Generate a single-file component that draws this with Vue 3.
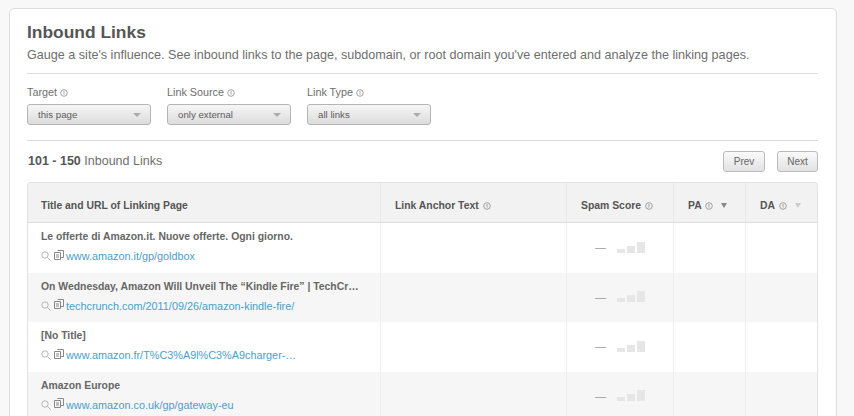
<script setup>
const filters = [
  { label: 'Target', value: 'this page' },
  { label: 'Link Source', value: 'only external' },
  { label: 'Link Type', value: 'all links' }
]

const rows = [
  { title: 'Le offerte di Amazon.it. Nuove offerte. Ogni giorno.', url: 'www.amazon.it/gp/goldbox' },
  { title: 'On Wednesday, Amazon Will Unveil The “Kindle Fire” | TechCr…', url: 'techcrunch.com/2011/09/26/amazon-kindle-fire/' },
  { title: '[No Title]', url: 'www.amazon.fr/T%C3%A9l%C3%A9charger-…' },
  { title: 'Amazon Europe', url: 'www.amazon.co.uk/gp/gateway-eu' }
]
</script>

<template>
  <div class="page">
    <section class="card">
      <h1>Inbound Links</h1>
      <p class="lede">Gauge a site's influence. See inbound links to the page, subdomain, or root domain you've entered and analyze the linking pages.</p>

      <div class="filters">
        <div v-for="f in filters" :key="f.label" class="filter">
          <div class="filter-label">
            {{ f.label }}
            <svg class="info" viewBox="0 0 8 8"><circle cx="4" cy="4" r="3.3" /><path d="M4 2v3.6" /></svg>
          </div>
          <div class="select">
            <span>{{ f.value }}</span>
            <i class="caret"></i>
          </div>
        </div>
      </div>

      <div class="result-bar">
        <div class="count"><strong>101 - 150</strong> Inbound Links</div>
        <div class="pager">
          <button>Prev</button>
          <button>Next</button>
        </div>
      </div>

      <div class="table">
        <div class="row head">
          <div class="cell">Title and URL of Linking Page</div>
          <div class="cell pad">Link Anchor Text
            <svg class="info" viewBox="0 0 8 8"><circle cx="4" cy="4" r="3.3" /><path d="M4 2v3.6" /></svg>
          </div>
          <div class="cell pad">Spam Score
            <svg class="info" viewBox="0 0 8 8"><circle cx="4" cy="4" r="3.3" /><path d="M4 2v3.6" /></svg>
          </div>
          <div class="cell pad">PA
            <svg class="info" viewBox="0 0 8 8"><circle cx="4" cy="4" r="3.3" /><path d="M4 2v3.6" /></svg>
            <i class="sort"></i>
          </div>
          <div class="cell pad">DA
            <svg class="info" viewBox="0 0 8 8"><circle cx="4" cy="4" r="3.3" /><path d="M4 2v3.6" /></svg>
            <i class="sort light"></i>
          </div>
        </div>

        <div v-for="r in rows" :key="r.url" class="row body">
          <div class="cell title-cell">
            <div class="link-title">{{ r.title }}</div>
            <div class="link-url">
              <svg class="mini" viewBox="0 0 10 10"><circle cx="4" cy="4" r="3.2" /><path d="M6.4 6.4 9.6 9.6" /></svg>
              <svg class="mini copy" viewBox="0 0 10 10"><path d="M3.5 .5h6v7h-3M.5 2.5h6v7h-6zM2 5h3M2 7h3" /></svg>
              <a>{{ r.url }}</a>
            </div>
          </div>
          <div class="cell"></div>
          <div class="cell spam">
            <span class="dash">—</span>
            <span class="bars"><b></b><b></b><b></b></span>
          </div>
          <div class="cell"></div>
          <div class="cell"></div>
        </div>
      </div>
    </section>
  </div>
</template>

<style scoped>
.page {
  height: 416px;
  overflow: hidden;
  box-sizing: border-box;
  padding: 8px 17px 0 9px;
  background: #f8f8f8;
  font-family: "Liberation Sans", Arial, sans-serif;
  color: #555;
}

.card {
  height: 440px;
  box-sizing: border-box;
  padding: 13px 18px 0 17px;
  background: #fff;
  border: 1px solid #dedede;
  border-radius: 5px;
}

h1 {
  margin: 0;
  font-size: 17.4px;
  line-height: 20px;
  font-weight: 700;
  color: #555;
}

.lede {
  margin: 4px 0 0;
  padding-bottom: 9px;
  border-bottom: 1px solid #ddd;
  font-size: 12.6px;
  line-height: 18px;
  color: #6e6e6e;
}

.filters {
  display: flex;
  gap: 16px;
  padding: 10px 0 15px;
  border-bottom: 1px solid #ddd;
}

.filter-label {
  font-size: 10.8px;
  line-height: 16px;
  color: #6e6e6e;
}

.info {
  width: 8px;
  height: 8px;
  fill: none;
  stroke: #999;
  stroke-width: 0.9;
  vertical-align: -1px;
}

.select {
  display: flex;
  align-items: center;
  justify-content: space-between;
  box-sizing: border-box;
  width: 124px;
  height: 21px;
  margin-top: 4px;
  padding: 0 9px 0 10px;
  border: 1px solid #b5b5b5;
  border-radius: 3px;
  background: linear-gradient(#f6f6f6, #dcdcdc);
  font-size: 9.7px;
  color: #5c5c5c;
}

.caret {
  width: 0;
  height: 0;
  border: 4px solid transparent;
  border-top: 4px solid #aaa;
  border-bottom: 0;
}

.result-bar {
  display: flex;
  align-items: center;
  justify-content: space-between;
  height: 41px;
}

.count {
  margin: -2px 0 0 1px;
  font-size: 12.5px;
  color: #6e6e6e;
}

.count strong {
  color: #555;
}

.pager {
  display: flex;
  gap: 12px;
}

button {
  width: 42px;
  height: 21px;
  padding: 0;
  border: 1px solid #bbb;
  border-radius: 3px;
  background: linear-gradient(#fafafa, #e2e2e2);
  font-family: inherit;
  font-size: 10px;
  color: #666;
}

button:last-child {
  width: 41px;
}

.table {
  border: 1px solid #e2e2e2;
  border-bottom: 0;
  border-radius: 4px 4px 0 0;
  overflow: hidden;
}

.row {
  display: grid;
  grid-template-columns: 353px 186px 107px 72px 1fr;
}

.cell {
  box-sizing: border-box;
  border-right: 1px solid #eee;
}

.cell:last-child {
  border-right: 0;
}

.head {
  height: 39px;
  background: #f2f2f2;
  border-bottom: 1px solid #dcdcdc;
  font-size: 10.4px;
  font-weight: 700;
  color: #555;
}

.head .cell {
  padding: 16px 0 0 13px;
  line-height: 14px;
  border-right-color: #e8e8e8;
}

.head .cell.pad {
  padding-left: 14px;
}

.head .cell.pad .info {
  margin-left: 1px;
}

.sort {
  display: inline-block;
  width: 0;
  height: 0;
  margin-left: 8px;
  border: 3.5px solid transparent;
  border-top: 5px solid #888;
  border-bottom: 0;
  vertical-align: 1px;
}

.sort.light {
  border-top-color: #ccc;
}

.body {
  height: 49.5px;
}

.body:nth-child(odd) {
  background: #f6f6f6;
}

.title-cell {
  padding: 7px 0 0 13px;
}

.link-title {
  font-size: 10.4px;
  line-height: 14px;
  font-weight: 700;
  color: #666;
}

.link-url {
  display: flex;
  align-items: center;
  margin-top: 5px;
  line-height: 14px;
}

.link-url a {
  margin-left: -1px;
  font-size: 10.85px;
  color: #4a9fc9;
}

.mini {
  width: 10px;
  height: 10px;
  margin-right: 3px;
  fill: none;
  stroke: #b5b5b5;
  stroke-width: 1;
}

.mini.copy {
  margin-top: -3px;
  stroke: #888;
}

.spam {
  display: flex;
  align-items: center;
  justify-content: center;
  gap: 11px;
  padding-bottom: 1px;
}

.dash {
  font-size: 11px;
  color: #999;
}

.bars {
  display: flex;
  align-items: flex-end;
  gap: 2px;
}

.bars b {
  width: 8px;
  background: #e6e6e6;
}

.bars b:nth-child(1) { height: 4px; }
.bars b:nth-child(2) { height: 7px; }
.bars b:nth-child(3) { height: 11px; }
</style>
